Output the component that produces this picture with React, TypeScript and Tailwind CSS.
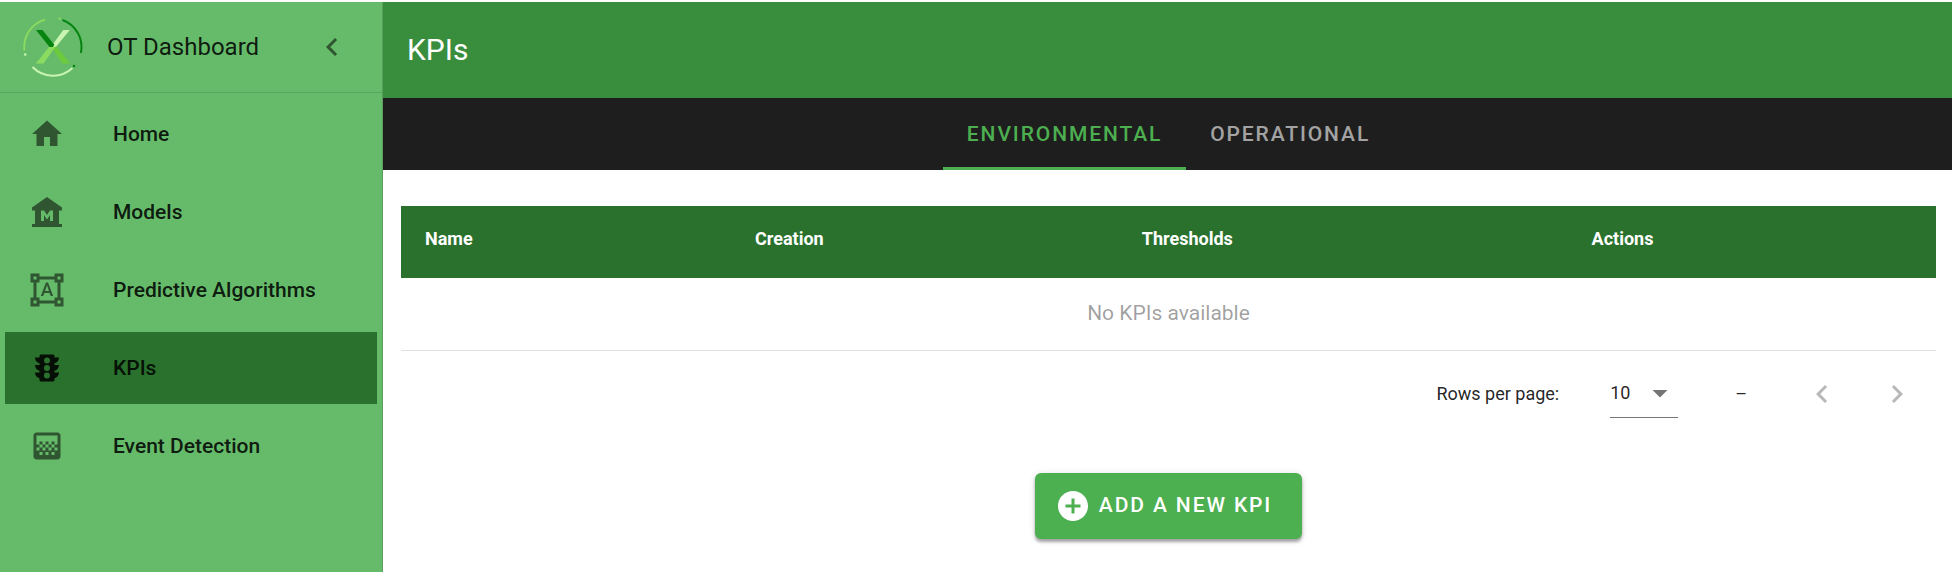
import { useState } from "react";
import type { ReactNode } from "react";
import {
  MdAddCircle,
  MdArrowDropDown,
  MdChevronLeft,
  MdChevronRight,
  MdFormatShapes,
  MdGradient,
  MdHome,
  MdMuseum,
  MdTraffic,
} from "react-icons/md";

function Logo() {
  return (
    <svg viewBox="0 0 60 60" className="size-15 shrink-0" fill="none" aria-hidden="true">
      <path d="M1.4 33.5A28.6 28.6 0 0 1 22 2.6" stroke="#8bdb60" strokeWidth="1.8" />
      <path d="M39.5 3A28.6 28.6 0 0 1 57.8 36" stroke="#068410" strokeWidth="2" />
      <path d="M9.5 50A28.6 28.6 0 0 0 49.5 51" stroke="#c9f5b0" strokeWidth="2" />
      <circle cx="2.2" cy="37.5" r="1.3" fill="#c9f5b0" />
      <circle cx="36.5" cy="1.8" r="1.2" fill="#8bdb60" />
      <circle cx="51" cy="49" r="1.3" fill="#068410" />
      <path d="M28 29.5h5.5L47 46.5h-7.5z" fill="#6ccb3c" />
      <path d="M26.5 29.5h6L20.5 46.5h-7.7z" fill="#8bdb60" />
      <path d="M40.3 13h6.5L33 29.8h-5z" fill="#c9f5b0" />
      <path d="M13 13h6.5L31.3 27.8l-1.3 2.2h-3.5z" fill="#068410" />
    </svg>
  );
}

const navItems: { label: string; icon: ReactNode }[] = [
  { label: "Home", icon: <MdHome /> },
  { label: "Models", icon: <MdMuseum /> },
  { label: "Predictive Algorithms", icon: <MdFormatShapes /> },
  { label: "KPIs", icon: <MdTraffic /> },
  { label: "Event Detection", icon: <MdGradient /> },
];

function Sidebar() {
  return (
    <aside className="flex w-[383px] shrink-0 flex-col border-r border-[#599f5b] bg-[#66bb6a]">
      <div className="flex h-[91px] items-center border-b border-[#5aa55d] pl-[23px] pr-8">
        <Logo />
        <span className="ml-6 flex-1 text-2xl text-black/87">OT Dashboard</span>
        <button type="button" aria-label="Collapse menu" className="text-4xl text-black/54">
          <MdChevronLeft />
        </button>
      </div>
      <nav className="flex flex-col gap-1.5 px-[5px] pt-[5px]">
        {navItems.map(({ label, icon }) => {
          const active = label === "KPIs";
          return (
            <a
              key={label}
              href="#"
              aria-current={active ? "page" : undefined}
              className={`flex h-18 items-center gap-12 px-6 ${active ? "bg-[#29712d]" : ""}`}
            >
              <span className={`text-4xl ${active ? "text-black/87" : "text-black/54"}`}>{icon}</span>
              <span className="pt-0.5 text-[21px] font-medium text-black/87">{label}</span>
            </a>
          );
        })}
      </nav>
    </aside>
  );
}

function Tabs() {
  const [selected, setSelected] = useState("Environmental");
  return (
    <div role="tablist" className="flex h-18 justify-center bg-[#1e1e1e] pl-0.5">
      {["Environmental", "Operational"].map((name) => (
        <button
          key={name}
          type="button"
          role="tab"
          aria-selected={selected === name}
          onClick={() => setSelected(name)}
          className={`border-b-3 px-6 pt-1 text-[21px] font-medium tracking-[0.09em] uppercase ${
            selected === name ? "border-b-[#4caf50] text-[#4caf50]" : "border-b-transparent text-white/60"
          }`}
        >
          {name}
        </button>
      ))}
    </div>
  );
}

function KpiTable() {
  return (
    <table className="w-full table-fixed border-collapse text-left">
      <thead>
        <tr className="h-18 bg-[#29712d] text-lg text-white">
          <th className="w-[21.5%] px-6 pb-1.5 font-bold">Name</th>
          <th className="w-[25.2%] px-6 pb-1.5 font-bold">Creation</th>
          <th className="w-[29.3%] px-6 pb-1.5 font-bold">Thresholds</th>
          <th className="px-6 pb-1.5 font-bold">Actions</th>
        </tr>
      </thead>
      <tbody>
        <tr className="h-18 border-b border-black/12">
          <td colSpan={4} className="text-center text-[21px] text-black/38">
            No KPIs available
          </td>
        </tr>
      </tbody>
    </table>
  );
}

function Pagination() {
  return (
    <div className="flex h-[86px] items-center justify-end pr-[21px] text-lg text-black/87">
      <label htmlFor="rows">Rows per page:</label>
      <div className="relative ml-[51px] w-17 border-b border-black/54">
        <select id="rows" defaultValue="10" className="h-12 w-full appearance-none bg-transparent text-black/87">
          <option>10</option>
          <option>25</option>
          <option>50</option>
        </select>
        <MdArrowDropDown className="pointer-events-none absolute top-1.5 right-0 text-4xl text-black/54" />
      </div>
      <span className="mx-[57px]">–</span>
      <div className="flex gap-[39px] text-4xl text-black/28">
        <button type="button" disabled aria-label="Previous page">
          <MdChevronLeft />
        </button>
        <button type="button" disabled aria-label="Next page">
          <MdChevronRight />
        </button>
      </div>
    </div>
  );
}

export default function App() {
  return (
    <div className="flex min-h-screen bg-white pt-0.5 font-['Roboto',sans-serif]">
      <Sidebar />
      <main className="min-w-0 flex-1">
        <header className="flex h-24 items-center bg-[#388e3c] px-6">
          <h1 className="text-3xl text-white">KPIs</h1>
        </header>
        <Tabs />
        <section className="pt-9 pr-4 pl-[18px]">
          <KpiTable />
          <Pagination />
          <div className="flex justify-center pt-9">
            <button
              type="button"
              className="flex h-[66px] items-center gap-2 rounded-md bg-[#4caf50] pr-[30px] pl-5 text-[21px] font-medium tracking-[0.09em] text-white uppercase shadow-[0_3px_3px_rgba(0,0,0,0.3),0_1px_7px_rgba(0,0,0,0.14)]"
            >
              <MdAddCircle className="text-4xl" />
              Add a new KPI
            </button>
          </div>
        </section>
      </main>
    </div>
  );
}
